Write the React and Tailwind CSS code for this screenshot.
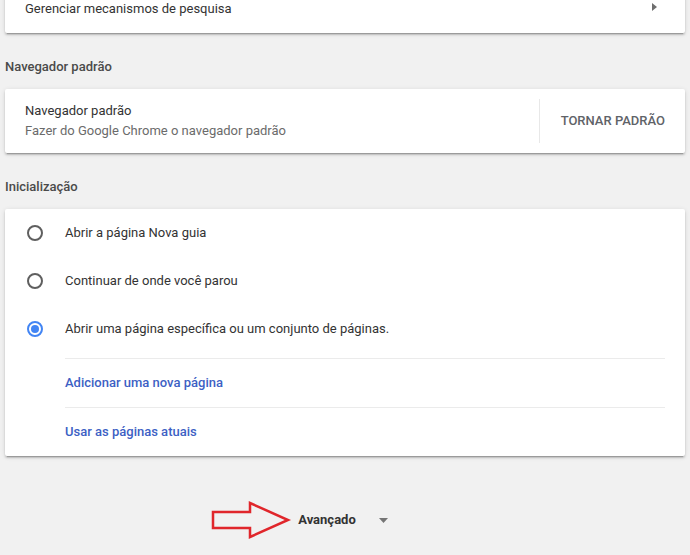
export default function App() {
  const card =
    "bg-white rounded-[2px] shadow-[0_2px_2px_0_rgba(0,0,0,0.14),0_1px_5px_0_rgba(0,0,0,0.12),0_3px_1px_-2px_rgba(0,0,0,0.2)]";
  const radios = [
    { label: "Abrir a página Nova guia", checked: false },
    { label: "Continuar de onde você parou", checked: false },
    { label: "Abrir uma página específica ou um conjunto de páginas.", checked: true },
  ];
  return (
    <div
      className="w-[690px] h-[555px] overflow-hidden bg-[#f1f1f1] px-[5px] text-[13px] text-[#333333]"
      style={{ fontFamily: "Roboto, 'Noto Sans', sans-serif" }}
    >
      {/* Card 1 (cut off at top) */}
      <div className={`${card} -mt-[15px] h-[48px] flex items-center pl-[20px] pr-[28px]`}>
        <span className="flex-1 leading-[20px] -mt-[1px]">Gerenciar mecanismos de pesquisa</span>
        <svg width="5" height="8" viewBox="0 0 5 8" className="-mt-[5px]">
          <path d="M0 0 L5 4 L0 8 Z" fill="#6e6e6e" />
        </svg>
      </div>

      {/* Section header */}
      <div className="h-[56px] pt-[25px] leading-[18px] font-medium text-[#4a4a4a]">Navegador padrão</div>

      {/* Card 2 */}
      <div className={`${card} h-[64px] flex items-center`}>
        <div className="flex-1 pl-[20px] -mt-[1px]">
          <div className="leading-[20px]">Navegador padrão</div>
          <div className="leading-[20px] text-[#6b6b6b]">Fazer do Google Chrome o navegador padrão</div>
        </div>
        <div className="w-px h-[44px] bg-[#e8e8e8]" />
        <div className="pl-[21px] pr-[20px] font-medium text-[#5f6368] leading-[20px]">TORNAR PADRÃO</div>
      </div>

      {/* Section header */}
      <div className="h-[56px] pt-[25px] leading-[18px] font-medium text-[#4a4a4a]">Inicialização</div>

      {/* Card 3 */}
      <div className={card}>
        <div className="pb-[5px]">
          {radios.map((r) => (
            <div key={r.label} className="h-[48px] flex items-center pl-[22px]">
              {r.checked ? (
                <span className="w-[16px] h-[16px] rounded-full border-2 border-[#4285f4] flex items-center justify-center">
                  <span className="w-[8px] h-[8px] rounded-full bg-[#4285f4]" />
                </span>
              ) : (
                <span className="w-[16px] h-[16px] rounded-full border-2 border-[#5f5f5f]" />
              )}
              <span className="ml-[22px] leading-[20px]">{r.label}</span>
            </div>
          ))}
        </div>
        <div className="ml-[60px] mr-[20px]">
          <div className="border-t border-[#ebebeb] h-[49px] flex items-center font-medium text-[#3d5fc4]">
            Adicionar uma nova página
          </div>
          <div className="border-t border-[#ebebeb] h-[49px] flex items-center font-medium text-[#3d5fc4]">
            Usar as páginas atuais
          </div>
        </div>
      </div>

      {/* Avançado */}
      <div className="mt-[53px] flex justify-center">
        <div className="relative flex items-center h-[22px] pr-[6px] pl-[2px]">
          <svg
            width="84"
            height="40"
            viewBox="0 0 84 40"
            className="absolute left-[-86px] top-[-8px]"
          >
            <path
              d="M3 11 L40 11 L40 2 L78 19 L40 36 L40 27 L3 27 Z"
              fill="none"
              stroke="#e0262b"
              strokeWidth="2.5"
              strokeLinejoin="miter"
            />
          </svg>
          <span className="font-bold text-[#333333] leading-[20px]">Avançado</span>
          <svg width="9" height="5" viewBox="0 0 9 5" className="ml-[23px] mt-[1px]">
            <path d="M0 0 L9 0 L4.5 5 Z" fill="#757575" />
          </svg>
        </div>
      </div>
    </div>
  );
}
